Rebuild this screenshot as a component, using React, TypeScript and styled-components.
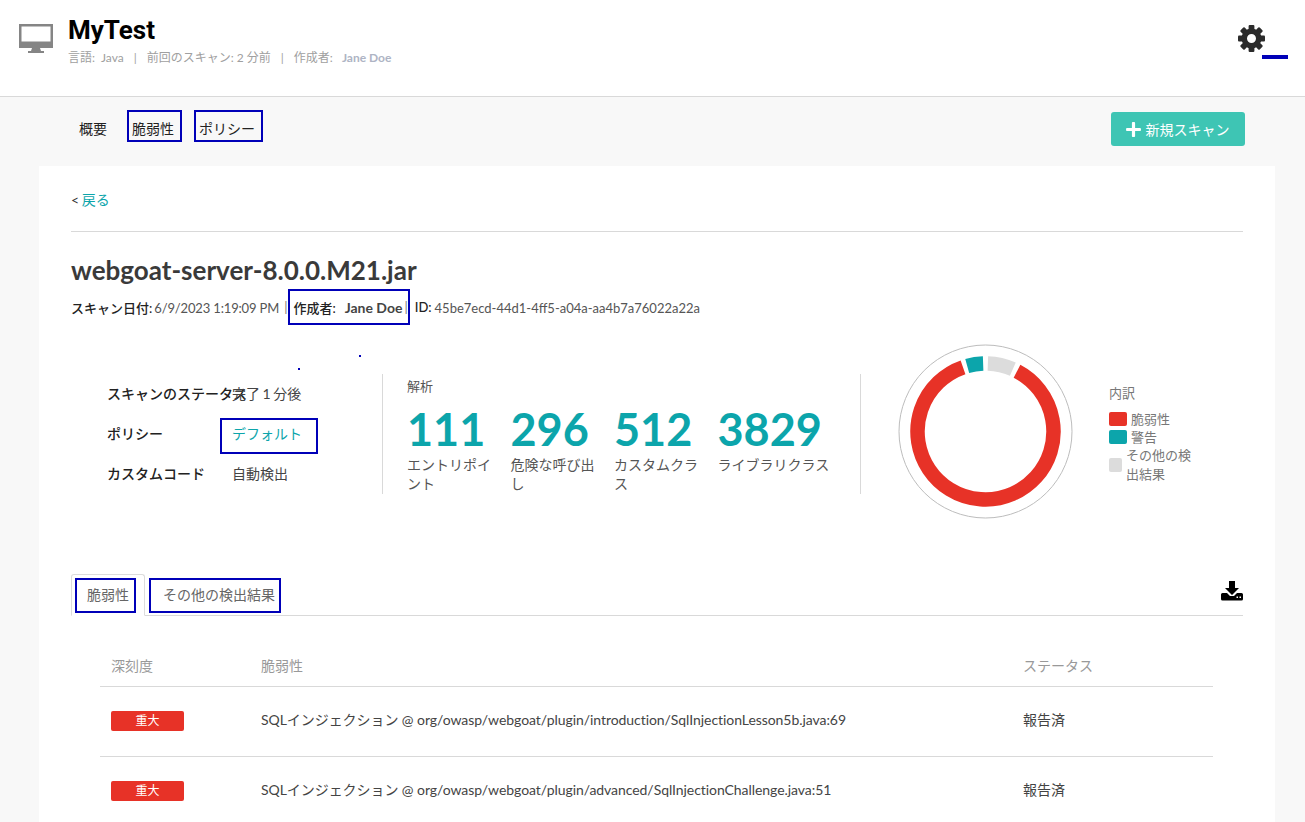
import * as React from "react";
import styled, { createGlobalStyle } from "styled-components";
import { FaPlus } from "react-icons/fa";

const BLUE = "#0000b8";
const TEAL = "#0ca5ab";
const RED = "#e73227";
const FONT = `Lato, "Noto Sans CJK JP", sans-serif`;

const GlobalStyle = createGlobalStyle`
  html, body {
    margin: 0;
    height: 100%;
    overflow: hidden;
    background: #f8f8f8;
    font-family: ${FONT};
    color: #333;
  }
  * { box-sizing: border-box; }
`;

const polar = (r: number, deg: number) => {
  const a = (deg * Math.PI) / 180;
  return [87.5 + r * Math.sin(a), 87.5 - r * Math.cos(a)];
};

const arc = (from: number, to: number) => {
  const [x1, y1] = polar(68, from);
  const [x2, y2] = polar(68, to);
  const large = to - from > 180 ? 1 : 0;
  return `M ${x1} ${y1} A 68 68 0 ${large} 1 ${x2} ${y2}`;
};

const stats = [
  { value: "111", label: "エントリポイント" },
  { value: "296", label: "危険な呼び出し" },
  { value: "512", label: "カスタムクラス" },
  { value: "3829", label: "ライブラリクラス", wide: true },
];

const rows = [
  "SQLインジェクション @ org/owasp/webgoat/plugin/introduction/SqlInjectionLesson5b.java:69",
  "SQLインジェクション @ org/owasp/webgoat/plugin/advanced/SqlInjectionChallenge.java:51",
];

const gearTeeth = [0, 45, 90, 135, 180, 225, 270, 315];

const App = () => {
  return (
    <Page>
      <GlobalStyle />
      <Header>
        <TitleGroup>
          <MonitorIcon width="34" height="29" viewBox="0 0 34 29">
            <path fillRule="evenodd" d="M0 0h34v24H0zM2.500 2.500v15h29v-15z" />
            <path d="M13 24h8l1 3h3v2H9v-2h3z" />
          </MonitorIcon>
          <div>
            <AppName>MyTest</AppName>
            <AppMeta>
              <span>言語:</span>
              <AppLang>Java</AppLang>
              <Pipe>|</Pipe>
              <span>前回のスキャン: 2 分前</span>
              <Pipe>|</Pipe>
              <span>作成者:</span>
              <AppOwner>Jane Doe</AppOwner>
            </AppMeta>
          </div>
        </TitleGroup>
        <Settings>
          <GearIcon width="27" height="27" viewBox="0 0 27 27">
            {gearTeeth.map((deg) => (
              <rect key={deg} x="10.6" y="0" width="5.8" height="7" rx="1" transform={`rotate(${deg} 13.500 13.500)`} />
            ))}
            <path
              fillRule="evenodd"
              d="M13.500 3.500a10 10 0 1 1 0 20a10 10 0 1 1 0-20zM13.500 9a4.500 4.500 0 1 0 0 9a4.500 4.500 0 1 0 0-9z"
            />
          </GearIcon>
          <SettingsBar />
        </Settings>
      </Header>

      <SubNav>
        <NavLinks>
          <NavLink>概要</NavLink>
          <NavLink $boxed>脆弱性</NavLink>
          <NavLink $boxed>ポリシー</NavLink>
        </NavLinks>
        <NewScan>
          <FaPlus size={17} />
          新規スキャン
        </NewScan>
      </SubNav>

      <Card>
        <Back>
          &lt; <BackLink>戻る</BackLink>
        </Back>
        <Rule />
        <ScanTitle>webgoat-server-8.0.0.M21.jar</ScanTitle>
        <ScanMeta>
          <MetaKey>スキャン日付:</MetaKey>
          <ScanDate>6/9/2023 1:19:09 PM</ScanDate>
          <MetaPipe>|</MetaPipe>
          <OwnerBox>
            <MetaKey>作成者:</MetaKey>
            <OwnerName>Jane Doe</OwnerName>
            <MetaPipe $tight>|</MetaPipe>
          </OwnerBox>
          <MetaKey>ID:</MetaKey>
          <ScanId>45be7ecd-44d1-4ff5-a04a-aa4b7a76022a22a</ScanId>
        </ScanMeta>

        <Summary>
          <Dot $left={227} $top={24} />
          <Dot $left={288} $top={11} />
          <Details>
            <DetailRow>
              <DetailLabel>スキャンのステータス</DetailLabel>
              <DetailValue>完了 1 分後</DetailValue>
            </DetailRow>
            <DetailRow $top={14}>
              <DetailLabel $shift>ポリシー</DetailLabel>
              <PolicyLink>デフォルト</PolicyLink>
            </DetailRow>
            <DetailRow $top={10}>
              <DetailLabel>カスタムコード</DetailLabel>
              <DetailValue>自動検出</DetailValue>
            </DetailRow>
          </Details>

          <Analysis>
            <AnalysisTitle>解析</AnalysisTitle>
            <StatGrid>
              {stats.map((s) => (
                <Stat key={s.value}>
                  <StatValue>{s.value}</StatValue>
                  <StatLabel $wide={s.wide}>{s.label}</StatLabel>
                </Stat>
              ))}
            </StatGrid>
          </Analysis>

          <ChartArea>
            <svg width="175" height="175" viewBox="0 0 175 175">
              <circle cx="87.5" cy="87.5" r="86.5" fill="none" stroke="#bdbdbd" strokeWidth="1" />
              <path d={arc(27.6, 340.7)} fill="none" stroke={RED} strokeWidth="14.5" />
              <path d={arc(344.4, 358)} fill="none" stroke={TEAL} strokeWidth="14.5" />
              <path d={arc(2, 23.7)} fill="none" stroke="#dcdcdc" strokeWidth="14.5" />
            </svg>
            <Legend>
              <LegendTitle>内訳</LegendTitle>
              <LegendItem>
                <Swatch $color={RED} />
                脆弱性
              </LegendItem>
              <LegendItem>
                <Swatch $color={TEAL} />
                警告
              </LegendItem>
              <LegendItem>
                <Swatch $color="#dcdcdc" $small />
                <LegendWrap>その他の検出結果</LegendWrap>
              </LegendItem>
            </Legend>
          </ChartArea>
        </Summary>

        <Tabs>
          <ActiveTab>
            <TabLabel>脆弱性</TabLabel>
          </ActiveTab>
          <TabLabel $wide>その他の検出結果</TabLabel>
          <DownloadButton>
            <svg width="22" height="20" viewBox="0 0 22 20">
              <path d="M8 0h6v7h4l-7 7l-7-7h4z" />
              <path d="M1.500 12H6l3 3h4l3-3h4.500A1.500 1.500 0 0 1 22 13.500V18a1.500 1.500 0 0 1-1.500 1.500h-19A1.500 1.500 0 0 1 0 18v-4.500A1.500 1.500 0 0 1 1.500 12z" />
              <rect x="15.500" y="15.500" width="1.500" height="1.500" fill="#fff" />
              <rect x="18.500" y="15.500" width="1.500" height="1.500" fill="#fff" />
            </svg>
          </DownloadButton>
        </Tabs>

        <Table>
          <thead>
            <tr>
              <Th $width={150}>深刻度</Th>
              <Th $width={762}>脆弱性</Th>
              <Th>ステータス</Th>
            </tr>
          </thead>
          <tbody>
            {rows.map((r) => (
              <tr key={r}>
                <Td>
                  <Badge>重大</Badge>
                </Td>
                <Td $text>{r}</Td>
                <Td $text>報告済</Td>
              </tr>
            ))}
          </tbody>
        </Table>
      </Card>
    </Page>
  );
};

export default App;

const Page = styled.div`
  width: 1305px;
`;

const Header = styled.header`
  height: 97px;
  background: #fff;
  border-bottom: 1px solid #d9d9d9;
  display: flex;
  justify-content: space-between;
  padding: 16px 17px 0 19px;
`;

const TitleGroup = styled.div`
  display: flex;
  gap: 15px;
`;

const MonitorIcon = styled.svg`
  flex: none;
  margin-top: 8px;
  fill: #858585;
`;

const AppName = styled.div`
  font: 700 26px/29px Roboto, sans-serif;
  color: #000;
`;

const AppMeta = styled.div`
  display: flex;
  margin-top: 5px;
  font-size: 12px;
  line-height: 16px;
  color: #a0a0a0;
`;

const AppLang = styled.span`
  margin-left: 6px;
`;

const Pipe = styled.span`
  margin: 0 10px;
`;

const AppOwner = styled.span`
  margin-left: 9px;
  font-weight: 700;
  color: #aeb4c4;
`;

const Settings = styled.div`
  display: flex;
  align-items: flex-end;
  height: 43px;
`;

const GearIcon = styled.svg`
  align-self: flex-start;
  margin-top: 9px;
  fill: #2b2b2b;
`;

const SettingsBar = styled.div`
  width: 26px;
  height: 4px;
  background: ${BLUE};
  margin-left: -3px;
`;

const SubNav = styled.div`
  height: 69px;
  display: flex;
  justify-content: space-between;
  align-items: flex-start;
  padding: 15px 60px 0 71px;
`;

const NavLinks = styled.nav`
  display: flex;
  gap: 12px;
  margin-top: -2px;
`;

const NavLink = styled.a<{ $boxed?: boolean }>`
  height: 32px;
  padding: 4px 6px 0 ${(p) => (p.$boxed ? "3px" : "6px")};
  display: flex;
  align-items: center;
  font-size: 14px;
  color: #222;
  border: 2px solid ${(p) => (p.$boxed ? BLUE : "transparent")};
`;

const NewScan = styled.button`
  width: 134px;
  height: 34px;
  border: 0;
  border-radius: 3px;
  background: #3ec5b4;
  color: #fff;
  font: 14px ${FONT};
  display: flex;
  align-items: center;
  justify-content: center;
  gap: 4px;
  padding: 0 2px 0 0;
`;

const Card = styled.main`
  margin: 0 30px 0 39px;
  background: #fff;
  padding: 25px 32px 0;
`;

const Back = styled.div`
  font-size: 14px;
  line-height: 20px;
  margin-top: -1px;
  word-spacing: -1px;
`;

const BackLink = styled.a`
  color: ${TEAL};
`;

const Rule = styled.hr`
  border: 0;
  border-top: 1px solid #d9d9d9;
  margin: 21px 0 0;
`;

const ScanTitle = styled.h1`
  margin: 23px 0 0;
  font-size: 26px;
  line-height: 30px;
  font-weight: 700;
  color: #3a3a3a;
`;

const ScanMeta = styled.div`
  display: flex;
  align-items: center;
  margin-top: 4px;
  font-size: 13px;
  color: #555;
`;

const MetaKey = styled.span`
  font-weight: 500;
  color: #222;
`;

const ScanDate = styled.span`
  margin: 2px 0 0 2px;
  letter-spacing: -0.15px;
`;

const ScanId = styled.span`
  margin: 2px 0 0 3px;
`;

const MetaPipe = styled.span<{ $tight?: boolean }>`
  margin: 0 ${(p) => (p.$tight ? "0 0 2px" : "1px 0 5px")};
  color: #777;
`;

const OwnerBox = styled.div`
  height: 36px;
  margin: 0 5px 0 0;
  padding: 0 0 0 3px;
  display: flex;
  align-items: center;
  border: 2px solid ${BLUE};
`;

const OwnerName = styled.span`
  margin-left: 9px;
  font-size: 14px;
  font-weight: 700;
  color: #444;
`;

const Summary = styled.section`
  position: relative;
  display: flex;
  align-items: flex-start;
  margin-top: 19px;
  height: 175px;
`;

const Dot = styled.i<{ $left: number; $top: number }>`
  position: absolute;
  left: ${(p) => p.$left}px;
  top: ${(p) => p.$top}px;
  width: 2px;
  height: 2px;
  background: ${BLUE};
`;

const Details = styled.div`
  width: 312px;
  height: 120px;
  margin-top: 30px;
  padding: 10px 0 0 36px;
  border-right: 1px solid #d9d9d9;
`;

const DetailRow = styled.div<{ $top?: number }>`
  display: grid;
  grid-template-columns: 126px 1fr;
  align-items: center;
  margin-top: ${(p) => p.$top ?? 0}px;
  font-size: 14px;
  line-height: 20px;
`;

const DetailLabel = styled.span<{ $shift?: boolean }>`
  white-space: nowrap;
  font-weight: 500;
  color: #222;
  padding-bottom: ${(p) => (p.$shift ? "5px" : "0")};
`;

const DetailValue = styled.span`
  margin-left: -1px;
  word-spacing: -1px;
  color: #444;
`;

const PolicyLink = styled.a`
  width: 98px;
  height: 36px;
  margin-left: -13px;
  padding: 0 0 5px 10px;
  display: flex;
  align-items: center;
  color: ${TEAL};
  border: 2px solid ${BLUE};
`;

const Analysis = styled.div`
  width: 478px;
  height: 120px;
  margin-top: 30px;
  padding-left: 24px;
  border-right: 1px solid #d9d9d9;
`;

const AnalysisTitle = styled.div`
  font-size: 13px;
  line-height: 24px;
  color: #555;
`;

const StatGrid = styled.div`
  display: grid;
  grid-template-columns: repeat(4, 103.5px);
`;

const Stat = styled.div`
  min-width: 0;
`;

const StatValue = styled.div`
  font-size: 45px;
  line-height: 48px;
  margin: 7px 0 2px;
  font-weight: 700;
  color: ${TEAL};
`;

const StatLabel = styled.div<{ $wide?: boolean }>`
  width: ${(p) => (p.$wide ? "120px" : "92px")};
  font-size: 14px;
  line-height: 19px;
  color: #555;
`;

const ChartArea = styled.div`
  display: flex;
  align-items: center;
  padding-left: 37px;
`;

const Legend = styled.div`
  width: 84px;
  margin-left: 36px;
  padding-top: 3px;
  font-size: 13px;
  color: #777;
`;

const LegendTitle = styled.div`
  margin-bottom: 7px;
  line-height: 20px;
`;

const LegendItem = styled.div`
  display: flex;
  align-items: center;
  gap: 4px;
  line-height: 18px;
`;

const Swatch = styled.i<{ $color: string; $small?: boolean }>`
  flex: none;
  width: ${(p) => (p.$small ? "13px" : "18px")};
  height: 14px;
  border-radius: 2px;
  background: ${(p) => p.$color};
`;

const LegendWrap = styled.span`
  line-height: 19px;
`;

const Tabs = styled.div`
  display: flex;
  align-items: flex-end;
  margin-top: 55px;
  height: 42px;
  border-bottom: 1px solid #d9d9d9;
`;

const ActiveTab = styled.div`
  width: 74px;
  height: 42px;
  margin-bottom: -1px;
  padding: 3px 8px 3px 3px;
  background: #fff;
  border: 1px solid #dcdcdc;
  border-bottom-color: #fff;
  border-radius: 3px 3px 0 0;
`;

const TabLabel = styled.div<{ $wide?: boolean }>`
  height: 35px;
  display: flex;
  align-items: center;
  margin: ${(p) => (p.$wide ? "0 0 2px 4px" : "0")};
  padding: ${(p) => (p.$wide ? "0 4px 3px 12px" : "0 0 3px 10px")};
  font-size: 14px;
  color: #666;
  border: 2px solid ${BLUE};
`;

const DownloadButton = styled.div`
  margin-left: auto;
  padding: 0 0 14px 0;
  line-height: 0;
  fill: #000;
`;

const Table = styled.table`
  width: 1113px;
  margin: 29px 0 0 29px;
  border-collapse: collapse;
  table-layout: fixed;
`;

const Th = styled.th<{ $width?: number }>`
  width: ${(p) => (p.$width ? `${p.$width}px` : "auto")};
  height: 41px;
  padding: 0 0 0 11px;
  text-align: left;
  font-size: 14px;
  font-weight: 400;
  color: #999;
  border-bottom: 1px solid #d9d9d9;
`;

const Td = styled.td<{ $text?: boolean }>`
  height: 70px;
  padding: 0 0 ${(p) => (p.$text ? "5px" : "0")} 11px;
  font-size: 14px;
  letter-spacing: -0.06px;
  color: #444;
  border-bottom: 1px solid #d9d9d9;
`;

const Badge = styled.span`
  display: block;
  width: 73px;
  height: 20px;
  border-radius: 2px;
  background: ${RED};
  color: #fff;
  font-size: 12px;
  line-height: 20px;
  text-align: center;
`;
